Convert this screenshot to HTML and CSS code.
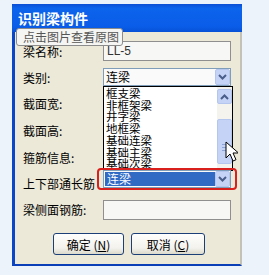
FILE: index.html
```html
<!DOCTYPE html>
<html>

<head>
   <meta name="viewport" content="width=device-width, initial-scale=1.0">
   <title>识别梁构件</title>
   <link rel="stylesheet" href="styles.css">
</head>

<body>
   <div class="window">
      <div class="titlebar">识别梁构件</div>
      <div class="tooltip">点击图片查看原图</div>

      <div class="content">
         <div class="form">
            <label>梁名称:</label>
            <div class="input">LL-5</div>

            <label>类别:</label>
            <div class="select">
               <span class="select-text">连梁</span>
               <span class="arrow-btn">
                  <svg width="9" height="6" viewBox="0 0 9 6"><path d="M1 1l3.5 3.5L8 1" stroke="#4a5e8a" stroke-width="2" fill="none"/></svg>
               </span>
               <div class="droplist">
                  <ul class="items">
                     <li>框支梁</li>
                     <li>非框架梁</li>
                     <li>井字梁</li>
                     <li>地框梁</li>
                     <li>基础连梁</li>
                     <li>基础主梁</li>
                     <li>基础次梁</li>
                  </ul>
                  <div class="scrollbar">
                     <span class="scroll-btn">
                        <svg width="9" height="6" viewBox="0 0 9 6"><path d="M1 5l3.5-3.5L8 5" stroke="#4a5e8a" stroke-width="2" fill="none"/></svg>
                     </span>
                     <span class="thumb">
                        <i></i><i></i><i></i>
                     </span>
                  </div>
               </div>
            </div>

            <label>截面宽:</label>
            <div></div>

            <label>截面高:</label>
            <div></div>

            <label>箍筋信息:</label>
            <div></div>

            <label>上下部通长筋</label>
            <div class="select select-top selected">
               <span class="select-text">连梁</span>
               <span class="arrow-btn">
                  <svg width="9" height="6" viewBox="0 0 9 6"><path d="M1 1l3.5 3.5L8 1" stroke="#4a5e8a" stroke-width="2" fill="none"/></svg>
               </span>
               <div class="marker"></div>
            </div>

            <label>梁侧面钢筋:</label>
            <div class="input"></div>
         </div>

         <div class="buttons">
            <button class="btn btn-ok">确定 (<u>N</u>)</button>
            <button class="btn btn-cancel">取消 (<u>C</u>)</button>
         </div>
      </div>

      <svg class="cursor" width="13" height="21" viewBox="0 0 13 21">
         <path d="M1 1v16l4-4 3 7 3-1.3-3-6.7h5.5z" fill="#fff" stroke="#000" stroke-width="1"/>
      </svg>
   </div>
</body>

</html>
```

FILE: styles.css
```css
body {
   margin: 0;
   background: #edf3fa;
   font-family: "Noto Sans CJK SC", "Liberation Sans", sans-serif;
   font-size: 12px;
   color: #000;
}

.window {
   position: relative;
   margin: 4px 0 0 12px;
   width: 225px;
   background: #ece9d8;
   border-left: 3px solid #0a46c8;
   border-right: 2px solid #c4c2b6;
   border-bottom: 2px solid #0a3fb8;
}

.titlebar {
   height: 28px;
   margin: 0 -2px 0 -3px;
   padding-left: 6px;
   line-height: 28px;
   font-size: 14px;
   font-weight: bold;
   color: #fff;
   background: linear-gradient(#0a4fd4, #0c63ec 15%, #0a5de8 80%, #0851d6);
}

.tooltip {
   position: absolute;
   left: 1px;
   top: 24px;
   width: 99px;
   height: 16px;
   padding-left: 6px;
   line-height: 16px;
   color: #555;
   background: #f5f5f3;
   border: 1px solid #8c8c8c;
   border-radius: 3px;
}

.content {
   padding: 6px 0 9px 8px;
}

.form {
   display: grid;
   grid-template-columns: 80px 128px;
   grid-template-rows: 26px 26px 27px 27px 26px 26px 27px;
}

.form label {
   align-self: center;
   white-space: nowrap;
}

.input {
   align-self: center;
   height: 18px;
   padding-left: 3px;
   line-height: 18px;
   font-family: "Liberation Sans", sans-serif;
   color: #333;
   background: #f7f7f5;
   border: 1px solid #8f8f8f;
}

.select {
   position: relative;
   align-self: center;
   display: flex;
   height: 16px;
   background: #fafafa;
   border: 1px solid #7f9db9;
}

.select-top {
   align-self: start;
}

.select-text {
   flex: 1;
   padding-left: 2px;
   line-height: 16px;
}

.selected .select-text {
   margin: 1px 0 1px 1px;
   line-height: 14px;
   color: #fff;
   background: #316ac5;
}

.arrow-btn,
.scroll-btn {
   display: flex;
   align-items: center;
   justify-content: center;
   width: 15px;
   background: #c5d3f6;
   border: 1px solid #b4c5ee;
   border-radius: 2px;
   box-sizing: border-box;
}

.droplist {
   position: absolute;
   top: 17px;
   left: -1px;
   width: 128px;
   height: 83px;
   display: flex;
   overflow: hidden;
   background: #fff;
   border: 1px solid #000;
}

.items {
   flex: 1;
   margin: 0;
   padding: 1px 0 0 2px;
   list-style: none;
   font-size: 11.5px;
   line-height: 11.7px;
}

.scrollbar {
   display: flex;
   flex-direction: column;
   width: 15px;
   padding-top: 2px;
   background: #f4f3ee;
}

.scroll-btn {
   height: 15px;
}

.thumb {
   display: flex;
   flex-direction: column;
   justify-content: flex-end;
   align-items: center;
   gap: 2px;
   height: 45px;
   margin-top: 15px;
   padding-bottom: 12px;
   box-sizing: border-box;
   background: #c5d3f6;
   border: 1px solid #b4c5ee;
   border-radius: 2px;
}

.thumb i {
   width: 6px;
   height: 1px;
   background: #8ea4d8;
}

.marker {
   position: absolute;
   inset: -3px -7px -3px -7px;
   border: 2px solid #d9201c;
   border-radius: 4px;
}

.buttons {
   display: flex;
   gap: 7px;
   margin-top: 10px;
   padding-left: 30px;
}

.btn {
   height: 22px;
   padding: 0;
   font-family: "Noto Sans CJK SC", sans-serif;
   font-size: 12px;
   color: #000;
   background: linear-gradient(#fefefe, #f3f2ec 70%, #dcd9cc);
   border: 1px solid #1d3f78;
   border-radius: 3px;
}

.btn-ok {
   width: 71px;
}

.btn-cancel {
   width: 74px;
}

.cursor {
   position: absolute;
   left: 210px;
   top: 137px;
}
```
